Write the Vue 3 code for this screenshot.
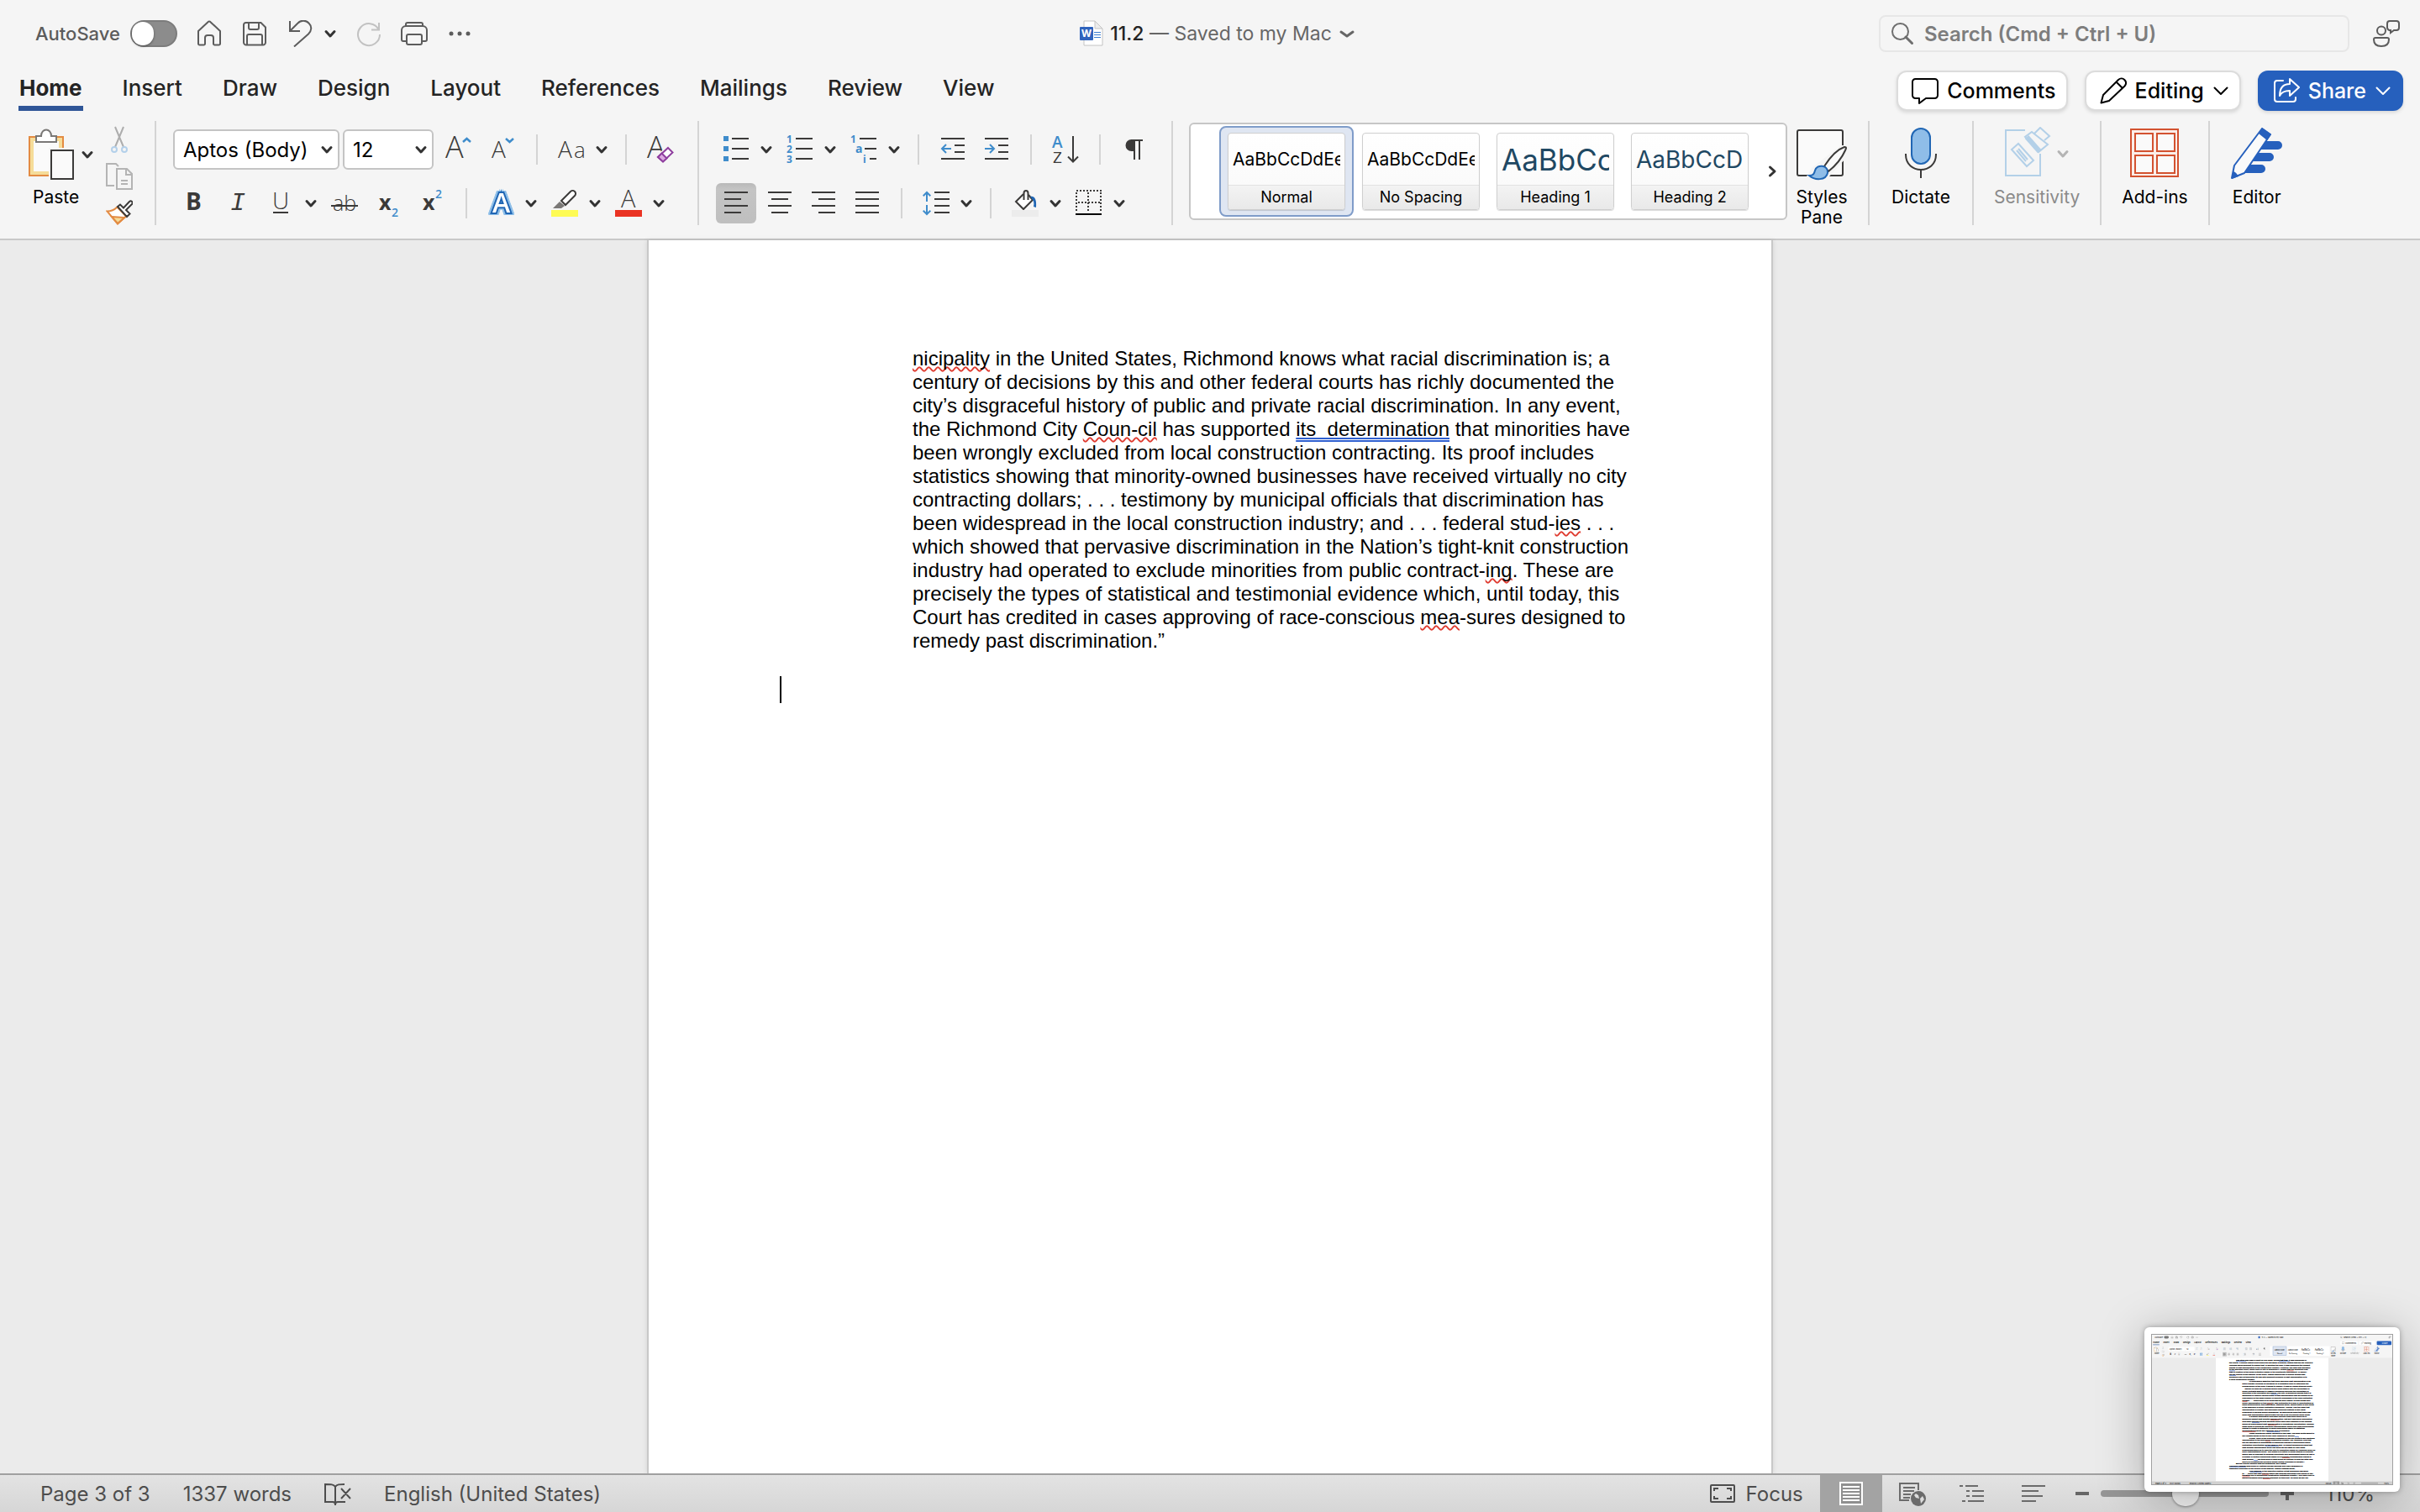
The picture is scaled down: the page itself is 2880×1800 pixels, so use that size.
<script setup>
import { ref } from 'vue'

const tabs = ['Home', 'Insert', 'Draw', 'Design', 'Layout', 'References', 'Mailings', 'Review', 'View']
const activeTab = ref('Home')

const autoSave = ref(false)
const fontName = ref('Aptos (Body)')
const fontSize = ref('12')
const search = ref('')
const zoom = ref(110)

const fontTools = [
  { icon: 'grow', label: 'Increase font size' },
  { icon: 'shrink', label: 'Decrease font size' },
  { sep: true },
  { icon: 'case', label: 'Change case', menu: true },
  { sep: true },
  { icon: 'clear', label: 'Clear formatting' }
]

const textTools = [
  { icon: 'bold', label: 'Bold' },
  { icon: 'italic', label: 'Italic' },
  { icon: 'underline', label: 'Underline', menu: true },
  { icon: 'strike', label: 'Strikethrough' },
  { icon: 'sub', label: 'Subscript' },
  { icon: 'sup', label: 'Superscript' },
  { sep: true },
  { icon: 'effects', label: 'Text effects', menu: true },
  { icon: 'highlight', label: 'Highlight', menu: true },
  { icon: 'fontcolor', label: 'Font color', menu: true }
]

const listTools = [
  { icon: 'bullets', label: 'Bullets', menu: true },
  { icon: 'numbers', label: 'Numbering', menu: true },
  { icon: 'multilevel', label: 'Multilevel list', menu: true },
  { sep: true },
  { icon: 'outdent', label: 'Decrease indent' },
  { icon: 'indent', label: 'Increase indent' },
  { sep: true },
  { icon: 'sort', label: 'Sort' },
  { sep: true },
  { icon: 'pilcrow', label: 'Show marks' }
]

const paragraphTools = [
  { icon: 'left', label: 'Align left', active: true },
  { icon: 'center', label: 'Center' },
  { icon: 'right', label: 'Align right' },
  { icon: 'justify', label: 'Justify' },
  { sep: true },
  { icon: 'spacing', label: 'Line spacing', menu: true },
  { sep: true },
  { icon: 'bucket', label: 'Shading', menu: true },
  { icon: 'borders', label: 'Borders', menu: true }
]

const toolRows = {
  font: [fontTools, textTools],
  paragraph: [listTools, paragraphTools]
}

// letters inside the 32px icons: [text, x, baseline, size, look]
const glyphs = {
  grow: [['A', 0, 26, 36]],
  shrink: [['A', 3, 26, 28]],
  case: [['A', 0, 26, 28], ['a', 19, 26, 26]],
  clear: [['A', 0, 26, 36]],
  bold: [['B', 7, 24, 28, 'strong']],
  italic: [['I', 8, 24, 30, 'slab']],
  underline: [['U', 6, 23, 28]],
  strike: [['ab', 2, 25, 25]],
  sub: [['x', 5, 24, 25, 'strong'], ['2', 20, 32, 14, 'blue']],
  sup: [['x', 5, 24, 25, 'strong'], ['2', 20, 10, 14, 'blue']],
  effects: [['A', 6, 27, 32, 'fx']],
  fontcolor: [['A', 7, 21, 29]],
  numbers: [['1', 0, 8, 12, 'digit'], ['2', 0, 20, 12, 'digit'], ['3', 0, 32, 12, 'digit']],
  multilevel: [['1', 0, 8, 12, 'digit'], ['a', 6, 20, 14, 'digit'], ['i', 15, 32, 12, 'digit']],
  sort: [['A', 0, 14, 19, 'blue'], ['Z', 1, 32, 19, 'mid']]
}

const styleCards = [
  { name: 'Normal', kind: 'body' },
  { name: 'No Spacing', kind: 'body' },
  { name: 'Heading 1', kind: 'h1' },
  { name: 'Heading 2', kind: 'h2' }
]
const activeStyle = ref('Normal')

const bigTools = [
  { icon: 'dictate', label: 'Dictate' },
  { icon: 'sensitivity', label: 'Sensitivity', menu: true, disabled: true },
  { icon: 'addins', label: 'Add-ins' },
  { icon: 'editor', label: 'Editor' }
]

// each line is a list of [text, proofing mark]
const lines = [
  [['nicipality', 'spell'], [' in the United States, Richmond knows what racial discrimination is; a']],
  [['century of decisions by this and other federal courts has richly documented the']],
  [['city’s disgraceful history of public and private racial discrimination. In any event,']],
  [['the Richmond City '], ['Coun-cil', 'spell'], [' has supported '], ['its  determination', 'grammar'], [' that minorities have']],
  [['been wrongly excluded from local construction contracting. Its proof includes']],
  [['statistics showing that minority-owned businesses have received virtually no city']],
  [['contracting dollars; . . . testimony by municipal officials that discrimination has']],
  [['been widespread in the local construction industry; and . . . federal stud-'], ['ies', 'spell'], [' . . .']],
  [['which showed that pervasive discrimination in the Nation’s tight-knit construction']],
  [['industry had operated to exclude minorities from public contract-'], ['ing', 'spell'], ['. These are']],
  [['precisely the types of statistical and testimonial evidence which, until today, this']],
  [['Court has credited in cases approving of race-conscious '], ['mea', 'spell'], ['-sures designed to']],
  [['remedy past discrimination.”']]
]

const views = [
  { icon: 'print-view', label: 'Print layout', active: true },
  { icon: 'web-view', label: 'Web layout' },
  { icon: 'outline-view', label: 'Outline' },
  { icon: 'draft-view', label: 'Draft' }
]

// text of the page shown in the floating preview: [left edge, text]
const previewLines = [
  [1010, 'The city’s plan was in effect for five years. During that time, it was challenged in'],
  [930, 'the courts. A federal district court upheld the set-aside ordinance, stating that the city council’s'],
  [930, '“findings [were] sufficient to ensure that, in adopting the Plan, it was remedying the present'],
  [930, 'effects of past discrimination in the construction industry.” However, the case was appealed'],
  [930, 'to the Supreme Court, which ruled in City of Richmond v. Croson that the Richmond plan'],
  [930, 'was in violation of the equal protection clause of the Fourteenth Amendment. In deliver-'],
  [930, 'ing the opinion of the majority of the Court, Justice Sandra Day O’Connor argued that'],
  [930, 'Richmond had not supported its plan with sufficient evidence of past discrimination in th'],
  [930, 'e city’s construction industry.'],
  [1167, '“A generalized assertion that there has been past discrimination in an'],
  [1085, 'entire industry provides no guidance for a legislative body to determine the'],
  [1085, 'precise scope of the injury it seeks to remedy. It “has no logical stopping point.”'],
  [1115, '“Relief” for such an ill-defined wrong could extend until the percentage of'],
  [1085, 'public contracts awarded to MBEs in Richmond mirrored the percentage of'],
  [1085, 'minorities in the population as a whole. The City of Richmond argues that it is'],
  [1085, 'attempting to remedy various forms of past discrimination that are alleged to be'],
  [1085, 'responsible for the small number of minority businesses in the local contracting'],
  [1085, 'industry. . . . While there is no doubt that the sorry history of both private and'],
  [1085, 'public discrimination in this coun-try has contributed to a lack of opportunities for'],
  [1085, 'black entrepreneurs, this observation, standing alone, cannot justify a rigid quota'],
  [1085, 'in the awarding of public contracts in Richmond, Virginia. Like the claim that'],
  [1085, 'discrimination in primary and secondary schooling justifies a rigid racial'],
  [1085, 'preference in medical school admissions, an amorphous claim that there has'],
  [1085, 'been past discrimination cannot justify the use of an un-yielding racial quota.'],
  [1167, 'It is sheer speculation how many minority firms there would be in'],
  [1085, 'Richmond absent past societal discrimi-nation, just as it was sheer speculation'],
  [1085, 'how many minority medical students would have been admitted to the medical'],
  [1085, 'school at Davis absent past discrimi-nation in educational opportunities. Defining'],
  [1085, 'these sorts of injuries as “identified discrimination” would give local governments'],
  [1085, 'license to create a patchwork of racial preferences based on statistical'],
  [1085, 'generalizations about any particular field of endeavor.'],
  [1167, 'These defects are readily apparent in this case. The 30% quota cannot in'],
  [1085, 'any realistic sense be tied to any injury suffered by anyone. . . .'],
  [1167, 'In sum, none of the evidence presented by the city points to any identified'],
  [1085, 'discrimination in the Rich-mond construction industry. We, therefore, hold that'],
  [1085, 'the city has failed to demonstrate a compelling interest in apportioning public'],
  [1085, 'contracting opportunities on the basis of race. To accept Richmond’s claim that'],
  [1085, 'past societal discrimination alone can serve as the basis for rigid racial'],
  [1085, 'preferences would be to open the door to competing claims for “remedial relief” for'],
  [1085, 'every disadvantaged group. The dream of a Nation of equal citizens in a society'],
  [1085, 'where race is irrelevant to personal opportunity and achievement would be lost in'],
  [1085, 'a mosaic of shifting preferences based on in-herently unmeasurable claims of'],
  [1085, 'past wrongs. . . . We think such a result would be contrary to both the letter and'],
  [1085, 'spirit of a constitutional provision whose central command is equality.”'],
  [1010, 'But the Court’s decision was not unanimous, and Justice'],
  [930, 'Thurgood Marshall was joined by Justices William Brennan and Harry Blackmun in'],
  [930, 'dissenting vigorously to the opinion of the majority. Justice Marshall wrote,'],
  [1167, '“The essence of the majority’s position is that Richmond has failed'],
  [1085, 'to . . . prove that past discrimi-nation has impeded minorities from joining or par-'],
  [1085, 'ticipating fully in Richmond’s construction contracting industry. I find deep irony in'],
  [1085, 'second-guessing Rich-mond’s judgment on this point. As much as any mu']
]

// [x, line number, width, color]
const previewMarks = [
  [1010, 0, 120, 'blue'], [1520, 0, 130, 'blue'], [930, 4, 70, 'blue'], [1615, 4, 80, 'red'],
  [930, 6, 80, 'blue'], [1430, 14, 80, 'blue'], [1085, 17, 60, 'red'], [1380, 18, 60, 'red'],
  [1420, 25, 100, 'red'], [1200, 26, 90, 'blue'], [1390, 27, 100, 'red'], [1085, 30, 160, 'red'],
  [1380, 30, 150, 'blue'], [1710, 32, 50, 'blue'], [1360, 34, 60, 'red'], [1360, 36, 160, 'blue'],
  [1560, 41, 90, 'red'], [1220, 42, 50, 'blue'], [930, 45, 200, 'blue'], [1180, 47, 140, 'blue'],
  [1320, 48, 80, 'red'], [1085, 49, 90, 'red'], [1330, 50, 90, 'red']
]

const previewTabs = [[23, 'Home'], [145, 'Insert'], [267, 'Draw'], [379, 'Design'], [512, 'Layout'], [646, 'References'], [837, 'Mailings'], [988, 'Review'], [1125, 'View']]

// [icon, x, y]
const previewIcons = [
  ['home', 234, 24], ['save', 288, 24], ['undo', 342, 24], ['redo', 422, 24], ['print', 476, 24], ['more', 530, 24],
  ['cut', 126, 150], ['copy', 126, 194], ['painter', 126, 238],
  ['grow', 530, 162], ['shrink', 582, 162], ['case', 664, 162], ['clear', 768, 162],
  ['bold', 215, 226], ['italic', 266, 226], ['underline', 317, 226], ['strike', 394, 226], ['sub', 450, 226], ['sup', 502, 226],
  ['effects', 580, 226], ['highlight', 656, 226], ['fontcolor', 732, 226],
  ['bullets', 857, 162], ['numbers', 933, 162], ['multilevel', 1009, 162], ['outdent', 1116, 162], ['indent', 1168, 162],
  ['sort', 1249, 162], ['pilcrow', 1332, 162],
  ['left', 858, 226], ['center', 910, 226], ['right', 962, 226], ['justify', 1014, 226],
  ['spacing', 1096, 226], ['bucket', 1202, 226], ['borders', 1278, 226]
]
</script>

<template>
  <div class="window">
    <svg class="sprite" aria-hidden="true">
      <symbol id="i-chevron" viewBox="0 0 16 16">
        <path d="M3 5.5l5 5.5 5-5.5" fill="none" stroke="currentColor" stroke-width="3" stroke-linecap="round" stroke-linejoin="round" />
      </symbol>
      <symbol id="i-thin-chevron" viewBox="0 0 20 20">
        <path d="M2.5 6.5L10 14l7.5-7.5" fill="none" stroke="currentColor" stroke-width="2" stroke-linecap="round" stroke-linejoin="round" />
      </symbol>
      <symbol id="i-flat-chevron" viewBox="0 0 20 20">
        <path d="M3 8l7 5 7-5" fill="none" stroke="currentColor" stroke-width="3" stroke-linecap="round" stroke-linejoin="round" />
      </symbol>
      <symbol id="i-home" viewBox="0 0 32 32">
        <path d="M3 13L14.5 2.2a2 2 0 0 1 3 0L29 13v15a1.500 1.500 0 0 1-1.500 1.500h-5A1.500 1.500 0 0 1 21 28v-7a3 3 0 0 0-3-3h-4a3 3 0 0 0-3 3v7a1.500 1.500 0 0 1-1.500 1.500h-5A1.500 1.500 0 0 1 3 28z" fill="none" stroke="currentColor" stroke-width="2" stroke-linejoin="round" />
      </symbol>
      <symbol id="i-save" viewBox="0 0 32 32">
        <g fill="none" stroke="currentColor" stroke-width="2">
          <path d="M5.5 3h18L29 8.500v18a3 3 0 0 1-3 3H6a3 3 0 0 1-3-3v-21a2.500 2.500 0 0 1 2.500-2.500z" />
          <path d="M9 3v6a2 2 0 0 0 2 2h8a2 2 0 0 0 2-2V3M7 29V19a2 2 0 0 1 2-2h14a2 2 0 0 1 2 2v10" />
        </g>
      </symbol>
      <symbol id="i-undo" viewBox="0 0 32 32">
        <path d="M4 1v12h12M4.500 12.500l9-9a8.800 8.800 0 0 1 13 0c4 4 3.500 9-.5 13L9 31.500" fill="none" stroke="currentColor" stroke-width="2" />
      </symbol>
      <symbol id="i-redo" viewBox="0 0 32 32">
        <path d="M28 3v8.500h-9M27.500 11A13 13 0 1 0 29 17" fill="none" stroke="currentColor" stroke-width="2" />
      </symbol>
      <symbol id="i-print" viewBox="0 0 32 32">
        <g fill="none" stroke="currentColor" stroke-width="2">
          <path d="M6 7V5a2 2 0 0 1 2-2h16a2 2 0 0 1 2 2v2" />
          <path d="M7 25H3a2 2 0 0 1-2-2V12a5 5 0 0 1 5-5h20a5 5 0 0 1 5 5v11a2 2 0 0 1-2 2h-4" />
          <rect x="7" y="17" width="18" height="12" rx="2" />
        </g>
      </symbol>
      <symbol id="i-more" viewBox="0 0 32 32">
        <g fill="currentColor"><circle cx="6" cy="16" r="2.500" /><circle cx="16" cy="16" r="2.500" /><circle cx="26" cy="16" r="2.500" /></g>
      </symbol>
      <symbol id="i-word" viewBox="0 0 28 32">
        <path d="M5 1h13l9 9v20H5z" fill="#fff" stroke="#c4c4c4" />
        <path d="M18 1v9h9z" fill="#ececec" stroke="#c4c4c4" />
        <path d="M17 14.500h8M17 17.500h8M17 20.500h8" stroke="#3a7bd0" stroke-width="1" />
        <rect x="0" y="8" width="16" height="16" rx="1" fill="#2f63bd" />
      </symbol>
      <symbol id="i-search" viewBox="0 0 28 28">
        <g fill="none" stroke="currentColor" stroke-width="2"><circle cx="11.500" cy="11.500" r="9.500" /><path d="M18 18l7.500 7.500" stroke-width="3" stroke-linecap="round" /></g>
      </symbol>
      <symbol id="i-person" viewBox="0 0 32 32">
        <g fill="none" stroke="currentColor" stroke-width="2">
          <circle cx="10" cy="12.500" r="5" />
          <path d="M3 21h14a2 2 0 0 1 2 2c0 5-3 8-9 8s-9-3-9-8a2 2 0 0 1 2-2z" />
          <path d="M20 1h8a3 3 0 0 1 3 3v5a3 3 0 0 1-3 3h-3l-4 3v-3a3.500 3.500 0 0 1-4-3V4a3 3 0 0 1 3-3z" />
        </g>
      </symbol>
      <symbol id="i-comment" viewBox="0 0 32 32">
        <path d="M4.500 2h23A3.500 3.500 0 0 1 31 5.500v16a3.500 3.500 0 0 1-3.500 3.500H17l-8 6v-6H4.500A3.500 3.500 0 0 1 1 21.500v-16A3.500 3.500 0 0 1 4.500 2z" fill="none" stroke="currentColor" stroke-width="2" stroke-linejoin="round" />
      </symbol>
      <symbol id="i-pencil" viewBox="0 0 32 32">
        <path d="M1.500 30.500L4 21 22 3c5-4.500 12 2 7.500 7.500L11 28zM19.500 5.500l7.500 7.500" fill="none" stroke="currentColor" stroke-width="2" stroke-linejoin="round" />
      </symbol>
      <symbol id="i-share" viewBox="0 0 32 32">
        <g fill="none" stroke="currentColor" stroke-width="2" stroke-linejoin="round" stroke-linecap="round">
          <path d="M12 4H5a3 3 0 0 0-3 3v19a3 3 0 0 0 3 3h19a3 3 0 0 0 3-3v-2" />
          <path d="M20 2l11 10-11 10v-6c-6 0-10 2-12 6 0-9 4-14 12-14z" />
        </g>
      </symbol>

      <symbol id="i-paste" viewBox="0 0 56 62">
        <rect x="2" y="10" width="40" height="46" fill="#fafafa" stroke="#e38b42" stroke-width="2" />
        <rect x="5" y="13" width="34" height="40" fill="none" stroke="#f5dc99" stroke-width="4" />
        <path d="M10 16V9h6c0-10 12-10 12 0h6v7z" fill="#fff" stroke="#7a7876" stroke-width="2" />
        <path d="M25 23h31v39H25z" fill="#f5f5f5" />
        <rect x="28" y="26" width="26" height="34" fill="#fafafa" stroke="#3b3a39" stroke-width="2" />
      </symbol>
      <symbol id="i-cut" viewBox="0 0 32 32">
        <path d="M11 1l10 24M21 1L11 25" stroke="#adadad" stroke-width="2" />
        <g fill="none" stroke="#b3d0ea" stroke-width="2"><circle cx="10" cy="28" r="3" /><circle cx="22" cy="28" r="3" /></g>
      </symbol>
      <symbol id="i-copy" viewBox="0 0 32 32">
        <g fill="none" stroke="#b4b4b4" stroke-width="2">
          <path d="M10 27H1V1h11l3 3" /><path d="M13 7h12l6 6v18H13zM24 7v7h7M18 21h8M18 25h8" />
        </g>
      </symbol>
      <symbol id="i-painter" viewBox="0 0 32 32">
        <path d="M1.500 13.500c5 0 9-2 12-5L24 19.500 14 28.500z" fill="#fff" stroke="#e38b42" stroke-width="2" />
        <path d="M7 20l15 1-8 7z" fill="#f5dc99" stroke="#e38b42" stroke-width="2" />
        <path d="M14 8l3-2.500 4 4L28 2a2 2 0 0 1 3 3l-7 7 4.500 4.500L25 20z" fill="#fff" stroke="#3b3a39" stroke-width="2" />
      </symbol>

      <symbol id="i-grow" viewBox="0 0 32 32"><path d="M21 7l4.500-4 4.500 4" fill="none" stroke="#3f8ccb" stroke-width="2.500" /></symbol>
      <symbol id="i-shrink" viewBox="0 0 32 32"><path d="M20 3l4.500 4L29 3" fill="none" stroke="#3f8ccb" stroke-width="2.500" /></symbol>
      <symbol id="i-clear" viewBox="0 0 32 32">
        <path d="M10 25L25 10l7 9-13 13z" fill="#f5f5f5" />
        <path d="M25 14l5.500 5.500L19 30.500 13 25z" fill="#fff" stroke="#8f3f9f" stroke-width="2" />
        <path d="M17.500 20.500l6 6-4.500 4L13 25z" fill="#dba9e0" stroke="#8f3f9f" stroke-width="2" />
      </symbol>
      <symbol id="i-underline" viewBox="0 0 32 32"><path d="M7 27h18" stroke="#3b3a39" stroke-width="2" /></symbol>
      <symbol id="i-strike" viewBox="0 0 32 32"><path d="M0 19h32" stroke="#3b3a39" stroke-width="2" /></symbol>
      <symbol id="i-highlight" viewBox="0 0 32 32">
        <path d="M2 22l8-8 6 5-4 3z" fill="#7a7876" />
        <path d="M12 13L23 2a3.500 3.500 0 0 1 5 5L17 18z" fill="#fff" stroke="#3b3a39" stroke-width="2" />
        <rect y="24" width="32" height="8" fill="#fefb54" />
      </symbol>
      <symbol id="i-fontcolor" viewBox="0 0 32 32"><rect y="24" width="32" height="8" fill="#ea3323" /></symbol>
      <symbol id="i-bullets" viewBox="0 0 32 32">
        <path d="M1 0h6v6H1zM1 12h6v6H1zM1 24h6v6H1z" fill="#3f8ccb" />
        <path d="M11 3h20M11 15h20M11 27h20" stroke="#3b3a39" stroke-width="2" />
      </symbol>
      <symbol id="i-numbers" viewBox="0 0 32 32"><path d="M11 3h20M11 15h20M11 27h20" stroke="#3b3a39" stroke-width="2" /></symbol>
      <symbol id="i-multilevel" viewBox="0 0 32 32"><path d="M11 3h20M17 15h14M23 27h8" stroke="#3b3a39" stroke-width="2" /></symbol>
      <symbol id="i-outdent" viewBox="0 0 32 32">
        <path d="M2 3h28M18 11h12M18 19h12M2 27h28" stroke="#3b3a39" stroke-width="2" />
        <path d="M14 15H3M8 10l-5 5 5 5" fill="none" stroke="#3f8ccb" stroke-width="2" />
      </symbol>
      <symbol id="i-indent" viewBox="0 0 32 32">
        <path d="M2 3h28M18 11h12M18 19h12M2 27h28" stroke="#3b3a39" stroke-width="2" />
        <path d="M2 15h11M8 10l5 5-5 5" fill="none" stroke="#3f8ccb" stroke-width="2" />
      </symbol>
      <symbol id="i-sort" viewBox="0 0 32 32">
        <path d="M25 0v30M19 24.500l6 6 6-6" fill="none" stroke="#3b3a39" stroke-width="2" />
      </symbol>
      <symbol id="i-pilcrow" viewBox="0 0 32 32">
        <path d="M16 4h-3.500a7 7 0 0 0 0 14H15V5h11" fill="#3b3a39" />
        <path d="M12 5h14M16 5v23M22 5v23" stroke="#3b3a39" stroke-width="2" />
      </symbol>
      <symbol id="i-left" viewBox="0 0 32 32"><path d="M2 3h28M2 11h20M2 19h28M2 27h20" stroke="#3b3a39" stroke-width="2" /></symbol>
      <symbol id="i-center" viewBox="0 0 32 32"><path d="M2 3h28M6 11h20M2 19h28M6 27h20" stroke="#3b3a39" stroke-width="2" /></symbol>
      <symbol id="i-right" viewBox="0 0 32 32"><path d="M2 3h28M10 11h20M2 19h28M10 27h20" stroke="#3b3a39" stroke-width="2" /></symbol>
      <symbol id="i-justify" viewBox="0 0 32 32"><path d="M2 3h28M2 11h28M2 19h28M2 27h28" stroke="#3b3a39" stroke-width="2" /></symbol>
      <symbol id="i-spacing" viewBox="0 0 32 32">
        <path d="M14 3h18M14 11h18M14 19h18M14 27h18" stroke="#3b3a39" stroke-width="2" />
        <path d="M5 14V3M.7 7.300L5 3l4.300 4.300M5 18v11M.7 24.700L5 29l4.300-4.300" fill="none" stroke="#3f8ccb" stroke-width="2" />
      </symbol>
      <symbol id="i-bucket" viewBox="0 0 32 32">
        <path d="M14 5l-9 9 9 9L25 12l-5-6" fill="#fff" stroke="#3b3a39" stroke-width="2" />
        <path d="M14.500 12V4c0-4 5-4 5 0v8" fill="none" stroke="#3b3a39" stroke-width="2" />
        <path d="M22 8c5-1 8 3 7 13l-3-1c1-4 0-7-1-8z" fill="#2066b4" />
        <rect y="24" width="32" height="8" fill="#ececec" />
      </symbol>
      <symbol id="i-borders" viewBox="0 0 32 32">
        <path d="M1 1h30M1 3v23M30 3v23M15 3v23M3 15h26" fill="none" stroke="#3b3a39" stroke-width="2" stroke-dasharray="2 2" />
        <path d="M0 29h31" stroke="#000" stroke-width="2" />
      </symbol>

      <symbol id="i-stylespane" viewBox="0 0 64 64">
        <rect x="3" y="4" width="54" height="54" rx="2" fill="#fafafa" stroke="#3b3a39" stroke-width="2" />
        <path d="M55 22h6v15l-20 22H14l6-10z" fill="#f5f5f5" />
        <path d="M35 47C44 33 53 26 59 24c3 0 2 2 1 4-4 9-10 17-20 25z" fill="#fafafa" stroke="#3b3a39" stroke-width="2" />
        <path d="M17 58c5 0 6-2 7-6 2-8 16-7 15 3-2 9-15 9-22 3z" fill="#8fbde8" stroke="#2066b4" stroke-width="2" />
      </symbol>
      <symbol id="i-dictate" viewBox="0 0 64 64">
        <rect x="21" y="2" width="22" height="42" rx="11" fill="#8fbde8" stroke="#2066b4" stroke-width="2" />
        <path d="M14 32v1c0 24 36 24 36 0v-1M32 51v10" fill="none" stroke="#3b3a39" stroke-width="2" />
      </symbol>
      <symbol id="i-sensitivity" viewBox="0 0 56 64">
        <g fill="none" stroke="#b3d0e8" stroke-width="2">
          <path d="M25 4H2v54h41V32" />
          <path d="M17 20l18 20-8 7L9 27zM17 26l11 13" /><path d="M15 28l11 13" />
          <path d="M33 6l19 15-11 9L25 12zM36 8l7-7 11 10-6 5" />
          <path d="M27 12l15 17" stroke-width="6" />
        </g>
      </symbol>
      <symbol id="i-addins" viewBox="0 0 64 64">
        <rect x="4" y="3" width="56" height="56" fill="#fbeee9" stroke="#d35230" stroke-width="2" />
        <g fill="#fafafa" stroke="#d35230" stroke-width="2">
          <rect x="9" y="8" width="21" height="21" /><rect x="35" y="8" width="21" height="21" />
          <rect x="9" y="34" width="21" height="21" /><rect x="35" y="34" width="21" height="21" />
        </g>
      </symbol>
      <symbol id="i-editor" viewBox="0 0 64 64">
        <path d="M30 17h27a5 5 0 0 1 0 10H24zM24 31h23a5 5 0 0 1 0 10H18zM16 45h21a5 5 0 0 1 0 10H10z" fill="#2660bd" />
        <path d="M38 2l10 7-31 46L2 61l3-15z" fill="#fafafa" stroke="#2660bd" stroke-width="2" stroke-linejoin="round" />
        <path d="M38 1l11 8-5 7-10-8zM2 62l2-9c3 1 4 3 6 6z" fill="#2660bd" />
      </symbol>

      <symbol id="i-proof" viewBox="0 0 32 32">
        <path d="M13 8c-2-3-5-3-12-3v21h9c2 0 3 1 3 3M13 8v22M13 8c2-3 5-3 11-3M13 29c0-2 1-3 3-3h9M20 10l11 12M31 10L20 22" fill="none" stroke="currentColor" stroke-width="2" />
      </symbol>
      <symbol id="i-focus" viewBox="0 0 32 32">
        <g fill="none" stroke="currentColor" stroke-width="2"><rect x="2" y="6" width="28" height="20" rx="1" /><path d="M6 13v-3h5M21 10h5v3M6 19v3h5M26 19v3h-5" /></g>
      </symbol>
      <symbol id="i-print-view" viewBox="0 0 32 32">
        <path d="M3 3h26v26H3z" fill="#8f8f8f" stroke="#fff" stroke-width="2" />
        <path d="M6 8h20M6 12h20M6 16h20M6 20h20M6 24h20" stroke="#fff" stroke-width="2" />
      </symbol>
      <symbol id="i-web-view" viewBox="0 0 32 32">
        <path d="M12 24H1V4h22v8M5 9h14M5 13h13M5 17h9M5 21h8" fill="none" stroke="#6b6b6b" stroke-width="2" />
        <circle cx="23" cy="22" r="9" fill="#6b6b6b" />
        <path d="M20 16l3 2 1 4-4-1-2-3zM25 22l3-3 2 4-4 5z" fill="#dcdcdc" />
      </symbol>
      <symbol id="i-outline-view" viewBox="0 0 32 32">
        <path d="M0 7h4M7 7h15M8 13h4M15 13h14M8 19h4M15 19h14M3 25h4M10 25h19" stroke="#6b6b6b" stroke-width="2" />
      </symbol>
      <symbol id="i-draft-view" viewBox="0 0 32 32">
        <path d="M2 7h28M2 13h20M2 19h25M2 25h17" stroke="#6b6b6b" stroke-width="2" />
      </symbol>
    </svg>

    <header class="titlebar">
      <div class="quick">
        <label class="autosave">
          <span>AutoSave</span>
          <input v-model="autoSave" type="checkbox" class="switch" />
        </label>
        <button type="button" aria-label="Home"><svg class="icon"><use href="#i-home" /></svg></button>
        <button type="button" aria-label="Save"><svg class="icon"><use href="#i-save" /></svg></button>
        <button type="button" class="undo" aria-label="Undo">
          <svg class="icon"><use href="#i-undo" /></svg>
          <svg class="chevron"><use href="#i-chevron" /></svg>
        </button>
        <button type="button" class="faded" aria-label="Redo"><svg class="icon"><use href="#i-redo" /></svg></button>
        <button type="button" aria-label="Print"><svg class="icon"><use href="#i-print" /></svg></button>
        <button type="button" aria-label="More"><svg class="icon"><use href="#i-more" /></svg></button>
      </div>
      <button type="button" class="doc-title">
        <svg class="word" viewBox="0 0 28 32">
          <use href="#i-word" />
          <text x="8" y="20" font-size="12" font-weight="700" text-anchor="middle" fill="#fff">W</text>
        </svg>
        <span><b>11.2</b> — Saved to my Mac</span>
        <svg class="thin-chevron"><use href="#i-flat-chevron" /></svg>
      </button>
      <div class="title-right">
        <label class="search">
          <svg><use href="#i-search" /></svg>
          <input v-model="search" type="text" aria-label="Search" placeholder="Search (Cmd + Ctrl + U)" />
        </label>
        <button type="button" aria-label="Presence"><svg class="icon"><use href="#i-person" /></svg></button>
      </div>
    </header>

    <nav class="tabbar">
      <div class="tabs">
        <button
          v-for="tab in tabs"
          :key="tab"
          type="button"
          class="tab"
          :class="{ active: tab === activeTab }"
          @click="activeTab = tab"
        >{{ tab }}</button>
      </div>
      <div class="actions">
        <button type="button" class="action"><svg class="icon"><use href="#i-comment" /></svg>Comments</button>
        <button type="button" class="action">
          <svg class="icon"><use href="#i-pencil" /></svg>Editing
          <svg class="thin-chevron"><use href="#i-thin-chevron" /></svg>
        </button>
        <button type="button" class="action share">
          <svg class="icon"><use href="#i-share" /></svg>Share
          <svg class="thin-chevron"><use href="#i-thin-chevron" /></svg>
        </button>
      </div>
    </nav>

    <section class="ribbon">
      <div class="clipboard">
        <div class="paste">
          <div class="paste-top">
            <button type="button" aria-label="Paste from clipboard"><svg class="paste-icon"><use href="#i-paste" /></svg></button>
            <button type="button" aria-label="Paste options"><svg class="chevron"><use href="#i-chevron" /></svg></button>
          </div>
          <button type="button" class="paste-label">Paste</button>
        </div>
        <div class="clip-tools">
          <button type="button" aria-label="Cut" disabled><svg class="icon"><use href="#i-cut" /></svg></button>
          <button type="button" aria-label="Copy" disabled><svg class="icon"><use href="#i-copy" /></svg></button>
          <button type="button" aria-label="Format painter"><svg class="icon"><use href="#i-painter" /></svg></button>
        </div>
      </div>

      <div v-for="(rows, group) in toolRows" :key="group" class="group" :class="group">
        <div v-for="(row, r) in rows" :key="r" class="tool-row">
          <template v-if="group === 'font' && r === 0">
            <div class="combo font-combo">
              <select v-model="fontName" aria-label="Font"><option>Aptos (Body)</option></select>
              <svg class="chevron"><use href="#i-chevron" /></svg>
            </div>
            <div class="combo size-combo">
              <select v-model="fontSize" aria-label="Font size"><option>12</option></select>
              <svg class="chevron"><use href="#i-chevron" /></svg>
            </div>
          </template>
          <template v-for="(tool, i) in row" :key="i">
            <span v-if="tool.sep" class="tool-sep"></span>
            <button
              v-else
              type="button"
              class="tool"
              :class="{ menu: tool.menu, active: tool.active }"
              :aria-label="tool.label"
            >
              <svg class="icon" viewBox="0 0 32 32">
                <text
                  v-for="(g, n) in glyphs[tool.icon]"
                  :key="n"
                  class="glyph"
                  :class="g[4]"
                  :x="g[1]"
                  :y="g[2]"
                  :font-size="g[3]"
                >{{ g[0] }}</text>
                <use :href="`#i-${tool.icon}`" />
              </svg>
              <svg v-if="tool.menu" class="chevron"><use href="#i-chevron" /></svg>
            </button>
          </template>
        </div>
      </div>

      <div class="styles-group">
        <div class="gallery">
          <button
            v-for="card in styleCards"
            :key="card.name"
            type="button"
            class="style-card"
            :class="{ active: card.name === activeStyle }"
            @click="activeStyle = card.name"
          >
            <span class="card-inner">
              <span class="sample" :class="card.kind">AaBbCcDdEe</span>
              <span class="card-name">{{ card.name }}</span>
            </span>
          </button>
          <button type="button" class="gallery-next" aria-label="More styles"><svg class="chevron"><use href="#i-chevron" /></svg></button>
        </div>
        <button type="button" class="big styles-pane">
          <svg class="big-icon"><use href="#i-stylespane" /></svg>
          <span>Styles<br />Pane</span>
        </button>
      </div>

      <div v-for="tool in bigTools" :key="tool.icon" class="big-group">
        <button type="button" class="big" :class="tool.icon" :disabled="tool.disabled">
          <span class="big-top">
            <svg class="big-icon"><use :href="`#i-${tool.icon}`" /></svg>
            <svg v-if="tool.menu" class="chevron"><use href="#i-chevron" /></svg>
          </span>
          <span>{{ tool.label }}</span>
        </button>
      </div>
    </section>

    <main class="desk">
      <article class="page">
        <blockquote class="quote">
          <p v-for="(line, i) in lines" :key="i"><span v-for="(part, j) in line" :key="j" :class="part[1]">{{ part[0] }}</span></p>
        </blockquote>
        <div class="caret"></div>
      </article>
    </main>

    <footer class="statusbar">
      <div class="status-left">
        <button type="button">Page 3 of 3</button>
        <button type="button">1337 words</button>
        <button type="button" aria-label="Proofing"><svg class="icon"><use href="#i-proof" /></svg></button>
        <button type="button">English (United States)</button>
      </div>
      <div class="status-right">
        <button type="button" class="focus"><svg class="icon"><use href="#i-focus" /></svg>Focus</button>
        <button
          v-for="view in views"
          :key="view.icon"
          type="button"
          class="view"
          :class="{ active: view.active }"
          :aria-label="view.label"
        ><svg class="icon"><use :href="`#i-${view.icon}`" /></svg></button>
        <button type="button" class="step" aria-label="Zoom out"></button>
        <input v-model="zoom" type="range" min="10" max="206" class="zoom" aria-label="Zoom" />
        <button type="button" class="step plus" aria-label="Zoom in"></button>
        <button type="button" class="zoom-value">{{ zoom }}%</button>
      </div>
    </footer>

    <aside class="preview" aria-hidden="true">
      <svg class="preview-shot" viewBox="0 0 2880 1800">
        <rect width="2880" height="1800" fill="#ebebeb" />
        <rect width="2880" height="285" fill="#f5f5f5" />
        <rect x="770" y="285" width="1340" height="1470" fill="#fff" />
        <rect y="1755" width="2880" height="45" fill="#d0d0d0" />
        <g class="mini-ui">
          <text x="42" y="49" font-size="22">AutoSave</text>
          <rect x="154" y="26" width="56" height="28" rx="14" fill="#777" />
          <rect x="1276" y="28" width="20" height="24" fill="#2f63bd" />
          <text x="1314" y="49" font-size="23">11.2 — Saved to my Mac</text>
          <text x="2290" y="49" font-size="24">Search (Cmd + Ctrl + U)</text>
          <use href="#i-search" x="2250" y="26" width="28" height="28" />
          <use href="#i-person" x="2824" y="24" width="32" height="32" />
          <text v-for="t in previewTabs" :key="t[0]" :x="t[0]" y="114" font-size="26" font-weight="600">{{ t[1] }}</text>
          <rect x="22" y="126" width="76" height="6" fill="#2b579a" />
          <rect x="2252" y="84" width="206" height="48" rx="10" fill="#fff" />
          <rect x="2478" y="84" width="188" height="48" rx="10" fill="#fff" />
          <rect x="2686" y="84" width="174" height="48" rx="10" fill="#2660bd" />
          <use href="#i-comment" x="2270" y="92" width="32" height="32" />
          <use href="#i-pencil" x="2496" y="92" width="32" height="32" />
          <text x="2313" y="117" font-size="25">Comments</text>
          <text x="2538" y="117" font-size="25">Editing</text>
          <text x="2746" y="117" font-size="25" class="inverse">Share</text>
          <rect x="206" y="154" width="198" height="48" fill="#fff" />
          <rect x="408" y="154" width="108" height="48" fill="#fff" />
          <text x="218" y="187" font-size="24">Aptos (Body)</text>
          <text x="420" y="187" font-size="24">12</text>
          <rect x="850" y="218" width="48" height="48" fill="#c2c2c2" />
          <svg v-for="p in previewIcons" :key="p[0]" :x="p[1]" :y="p[2]" width="32" height="32" viewBox="0 0 32 32">
            <text
              v-for="(g, n) in glyphs[p[0]]"
              :key="n"
              class="glyph"
              :class="g[4]"
              :x="g[1]"
              :y="g[2]"
              :font-size="g[3]"
            >{{ g[0] }}</text>
            <use :href="`#i-${p[0]}`" />
          </svg>
          <use href="#i-paste" x="33" y="153" width="56" height="62" />
          <text x="40" y="243" font-size="21">Paste</text>
          <rect x="1414" y="146" width="711" height="114" fill="#fff" />
          <rect x="1450" y="150" width="160" height="106" fill="#dfe6f2" stroke="#7f9cc9" stroke-width="4" />
          <g v-for="(card, i) in styleCards" :key="card.name">
            <text :x="1467 + i * 160" y="198" :font-size="i > 1 ? 28 : 21">{{ i > 1 ? 'AaBbCc' : 'AaBbCcDdE' }}</text>
            <text :x="1530 + i * 160" y="240" font-size="18" text-anchor="middle">{{ card.name }}</text>
          </g>
          <use href="#i-stylespane" x="2136" y="151" width="64" height="64" />
          <use href="#i-dictate" x="2252" y="151" width="64" height="64" />
          <use href="#i-sensitivity" x="2388" y="151" width="56" height="64" />
          <use href="#i-addins" x="2532" y="151" width="64" height="64" />
          <use href="#i-editor" x="2655" y="151" width="64" height="64" />
          <g font-size="21" text-anchor="middle">
            <text x="2167" y="241">Styles</text><text x="2167" y="267">Pane</text><text x="2285" y="243">Dictate</text>
            <text x="2423" y="243" opacity="0.5">Sensitivity</text><text x="2565" y="243">Add-ins</text><text x="2686" y="243">Editor</text>
          </g>
          <g font-size="24">
            <text x="49" y="1786">Page 2 of 3</text><text x="219" y="1786">1337 words</text>
            <text x="457" y="1786">English (United States)</text><text x="2078" y="1786">Focus</text><text x="2772" y="1786">110%</text>
          </g>
          <rect x="2166" y="1756" width="74" height="44" fill="#999" />
          <use v-for="(view, i) in views" :key="view.icon" :href="`#i-${view.icon}`" :x="2187 + i * 72" y="1762" width="32" height="32" />
          <rect x="2500" y="1774" width="200" height="8" fill="#8c8c8c" />
        </g>
        <g class="mini-doc">
          <text v-for="(line, i) in previewLines" :key="i" :x="line[0]" :y="322 + i * 28">{{ line[1] }}</text>
        </g>
        <rect
          v-for="(mark, i) in previewMarks"
          :key="i"
          :x="mark[0]"
          :y="324 + mark[1] * 28"
          :width="mark[2]"
          height="6"
          :fill="mark[3] === 'red' ? '#e0453c' : '#3a66d0'"
        />
      </svg>
    </aside>
  </div>
</template>

<style>
body {
  margin: 0;
}
</style>

<style scoped>
.window {
  position: relative;
  display: flex;
  flex-direction: column;
  min-height: 100vh;
  overflow: hidden;
  background: #f5f5f5;
  color: #242424;
  font-family: Inter, "Liberation Sans", sans-serif;
}

.sprite {
  position: absolute;
  width: 0;
  height: 0;
}

button {
  display: flex;
  align-items: center;
  padding: 0;
  border: none;
  background: none;
  color: inherit;
  font: inherit;
  white-space: nowrap;
}

svg {
  display: block;
  flex: none;
}

.icon {
  width: 32px;
  height: 32px;
  overflow: visible;
}

.chevron {
  width: 16px;
  height: 16px;
  color: #333;
}

.thin-chevron {
  width: 20px;
  height: 20px;
}

/* letters drawn in tool icons */

.glyph {
  fill: #3b3a39;
  font-family: "Open Sans", "Noto Sans", sans-serif;
  font-weight: 300;
}

.glyph.mid {
  font-weight: 400;
}

.glyph.strong {
  font-weight: 700;
}

.glyph.slab {
  font-family: "Liberation Mono", monospace;
  font-style: italic;
}

.glyph.blue {
  fill: #3f8ccb;
  font-weight: 600;
}

.glyph.digit {
  fill: #3f8ccb;
  font-weight: 700;
}

.glyph.fx {
  fill: #fff;
  stroke: #2066b4;
  stroke-width: 4px;
  paint-order: stroke;
  font-weight: 600;
  filter: drop-shadow(2px 0 0 #8fbfe8) drop-shadow(-2px 0 0 #8fbfe8) drop-shadow(0 -1px 0 #8fbfe8) drop-shadow(0 1px 0 #8fbfe8);
}

/* title bar */

.titlebar {
  display: grid;
  grid-template-columns: 1fr auto 1fr;
  align-items: center;
  height: 80px;
  padding: 0 24px 0 42px;
}

.quick {
  display: flex;
  align-items: center;
  gap: 22px;
  color: #5c5c5c;
}

.autosave {
  display: flex;
  align-items: center;
  gap: 12px;
  font-size: 22px;
  font-weight: 500;
}

.switch {
  display: flex;
  appearance: none;
  box-sizing: border-box;
  width: 56px;
  height: 32px;
  margin: 0;
  border: 2px solid #7c7c7c;
  border-radius: 16px;
  background: #8c8c8c;
}

.switch::before {
  content: "";
  width: 26px;
  height: 28px;
  border-radius: 14px;
  background: #fff;
  box-shadow: 0 1px 3px rgba(0, 0, 0, 0.4);
}

.undo {
  gap: 12px;
}

.faded {
  color: #c2c2c2;
}

.doc-title {
  gap: 8px;
  color: #666;
  font-size: 23px;
}

.doc-title b {
  color: #242424;
  font-weight: 500;
}

.word {
  width: 28px;
  height: 32px;
}

.title-right {
  display: flex;
  justify-content: flex-end;
  align-items: center;
  gap: 28px;
  color: #5c5c5c;
}

.search {
  display: flex;
  align-items: center;
  gap: 12px;
  box-sizing: border-box;
  width: 560px;
  height: 44px;
  padding: 0 12px;
  border: 2px solid #e7e7e7;
  border-radius: 8px;
  color: #6e6e6e;
}

.search svg {
  width: 28px;
  height: 28px;
}

.search input {
  flex: 1;
  min-width: 0;
  padding: 0;
  border: none;
  outline: none;
  background: none;
  color: #333;
  font: inherit;
  font-size: 24px;
  font-weight: 600;
}

.search input::placeholder {
  color: #7d7d7d;
}

/* tabs */

.tabbar {
  display: flex;
  justify-content: space-between;
  align-items: flex-start;
  height: 60px;
  padding: 4px 20px 0 22px;
}

.tabs {
  display: flex;
  gap: 46px;
}

.tab {
  padding: 4px 1px 5px;
  border-bottom: 6px solid transparent;
  font-size: 26px;
  font-weight: 500;
  line-height: 33px;
}

.tab.active {
  border-image: linear-gradient(#2f5597, #2f5597) 1;
  font-weight: 700;
}

.actions {
  display: flex;
  gap: 20px;
}

.action {
  gap: 10px;
  box-sizing: border-box;
  height: 48px;
  padding: 0 12px 0 16px;
  border: 2px solid #dcdcdc;
  border-radius: 12px;
  background: #fff;
  box-shadow: 0 2px 4px rgba(0, 0, 0, 0.12);
  color: #000;
  font-size: 25px;
  font-weight: 500;
}

.action.share {
  border-color: #2660bd;
  background: #2660bd;
  color: #fff;
}

/* ribbon */

.ribbon {
  display: flex;
  box-sizing: border-box;
  height: 142px;
  padding-bottom: 16px;
  border-bottom: 2px solid #c8c8c8;
}

.clipboard,
.group,
.styles-group,
.big-group {
  box-sizing: border-box;
  border-right: 2px solid #d4d4d4;
}

.big-group:last-child {
  border-right: none;
}

.clipboard {
  display: flex;
  justify-content: space-between;
  width: 186px;
  padding: 0 26px 0 33px;
}

.paste {
  display: flex;
  flex-direction: column;
  align-items: flex-start;
  gap: 8px;
  padding-top: 9px;
}

.paste-top {
  display: flex;
  align-items: center;
  gap: 7px;
}

.paste-icon {
  width: 56px;
  height: 62px;
}

.paste-label {
  padding-left: 6px;
  color: #000;
  font-size: 21px;
  line-height: 24px;
}

.clip-tools {
  display: flex;
  flex-direction: column;
  gap: 12px;
  padding-top: 6px;
}

.group {
  display: flex;
  flex-direction: column;
  gap: 16px;
  min-width: 564px;
  padding: 10px 18px 0;
}

.group.font {
  min-width: 644px;
}

.tool-row {
  display: flex;
  align-items: center;
  height: 48px;
}

.combo {
  display: flex;
  align-items: center;
  box-sizing: border-box;
  height: 48px;
  margin-right: 4px;
  padding-right: 5px;
  border: 2px solid #c4c4c4;
  border-radius: 6px;
  background: #fff;
}

.font-combo {
  width: 198px;
  margin-left: 2px;
}

.size-combo {
  width: 108px;
}

.combo select {
  flex: 1;
  min-width: 0;
  padding: 0 0 0 10px;
  border: none;
  appearance: none;
  background: none;
  color: #000;
  font: inherit;
  font-size: 24px;
}

.tool {
  box-sizing: border-box;
  width: 48px;
  height: 48px;
  margin: 0 2px;
  padding: 0 8px;
  border-radius: 6px;
}

.tool.menu {
  gap: 12px;
  width: 72px;
}

.tool.active {
  background: linear-gradient(#b9b9b9, #c4c4c4 15%, #bfbfbf);
}

.tool-sep {
  width: 2px;
  height: 36px;
  margin: 0 14px;
  background: #d4d4d4;
}

.styles-group {
  display: flex;
  align-items: flex-start;
  padding: 0 14px 0 19px;
}

.gallery {
  display: flex;
  align-items: center;
  box-sizing: border-box;
  height: 116px;
  margin-top: 2px;
  padding-left: 34px;
  border: 2px solid #c6c6c6;
  border-radius: 6px;
  background: #fff;
}

.style-card {
  box-sizing: border-box;
  width: 160px;
  height: 108px;
  padding: 6px 8px;
  border: 2px solid transparent;
  border-radius: 8px;
}

.style-card.active {
  border-color: #7f9cc9;
  background: #dfe6f2;
}

.card-inner {
  display: flex;
  flex-direction: column;
  box-sizing: border-box;
  width: 140px;
  height: 92px;
  border: 1px solid #cfcfcf;
  border-radius: 4px;
  background: linear-gradient(#fff, #f8f8f8);
  box-shadow: 0 1px 1px rgba(0, 0, 0, 0.15);
  overflow: hidden;
}

.sample {
  display: flex;
  align-items: center;
  flex: 1;
  margin: 0 5px;
  overflow: hidden;
  color: #000;
  font-size: 21px;
}

.sample.h1 {
  color: #1f4863;
  font-size: 35px;
}

.sample.h2 {
  color: #1f4863;
  font-size: 28px;
}

.card-name {
  border-top: 1px solid #e2e2e2;
  background: linear-gradient(#f3f3f3, #e9e9e9);
  color: #000;
  font-size: 18px;
  line-height: 28px;
  text-align: center;
}

.gallery-next {
  padding: 0 8px 0 10px;
}

.gallery-next .chevron {
  transform: rotate(-90deg);
}

.big {
  flex-direction: column;
  gap: 8px;
  width: 100%;
  padding-top: 7px;
  color: #000;
  font-size: 21px;
  line-height: 24px;
  text-align: center;
}

.styles-pane {
  width: 82px;
}

.big-top {
  display: flex;
  align-items: center;
  gap: 6px;
}

.big-icon {
  width: 64px;
  height: 64px;
}

.big:disabled {
  color: #8a8a8a;
}

.sensitivity .big-icon {
  width: 56px;
}

.sensitivity .chevron {
  color: #b4b4b4;
}

.big-group {
  min-width: 124px;
  padding: 0 24px;
}

.big-group:last-child {
  min-width: 108px;
}

/* document */

.desk {
  display: flex;
  flex: 1;
  justify-content: center;
  background: #ebebeb;
}

.page {
  box-sizing: border-box;
  width: 1340px;
  padding: 127px 156px 0;
  border: solid #c8c8c8;
  border-width: 0 2px;
  background: #fff;
  box-shadow: 0 0 6px rgba(0, 0, 0, 0.1);
}

.quote {
  margin: 0 0 28px 158px;
  color: #000;
  font-family: "Liberation Sans", Arial, sans-serif;
  font-size: 24px;
  line-height: 28px;
  white-space: pre;
}

.quote p {
  margin: 0;
}

.spell {
  text-decoration: underline wavy #df3b30 2px;
  text-decoration-skip-ink: none;
  text-underline-offset: 1px;
}

.grammar {
  text-decoration: underline double #2f5fd0 2px;
  text-decoration-skip-ink: none;
  text-underline-offset: 2px;
}

.caret {
  width: 2px;
  height: 32px;
  background: #000;
}

/* status bar */

.statusbar {
  display: flex;
  justify-content: space-between;
  box-sizing: border-box;
  height: 46px;
  padding: 0 54px 0 48px;
  border-top: 2px solid #a0a0a0;
  background: linear-gradient(#e3e3e3, #d6d6d6);
  color: #4d4d4d;
  font-size: 24px;
}

.status-left,
.status-right {
  display: flex;
  align-items: stretch;
}

.status-left {
  gap: 39px;
}

.focus {
  gap: 12px;
  margin-right: 20px;
}

.view {
  padding: 0 20px;
}

.view.active {
  padding: 0 21px;
  background: #a3a3a3;
}

.step {
  align-self: center;
  width: 16px;
  height: 16px;
  margin: 0 14px;
  background: linear-gradient(#666, #666) center / 16px 4px no-repeat;
}

.plus {
  background: linear-gradient(#666, #666) center / 16px 4px no-repeat, linear-gradient(#666, #666) center / 4px 16px no-repeat;
}

.zoom {
  align-self: center;
  appearance: none;
  width: 200px;
  height: 8px;
  margin: 0;
  border-radius: 4px;
  background: #969696;
}

.zoom::-webkit-slider-thumb {
  appearance: none;
  width: 32px;
  height: 30px;
  border-radius: 15px;
  background: #f4f4f4;
  box-shadow: 0 1px 3px rgba(0, 0, 0, 0.4);
}

.zoom-value {
  margin-left: 24px;
}

/* floating screenshot preview */

.preview {
  position: absolute;
  right: 24px;
  bottom: 24px;
  padding: 8px;
  border-radius: 6px;
  background: #fff;
  box-shadow: 0 0 6px rgba(0, 0, 0, 0.3), 0 8px 56px rgba(0, 0, 0, 0.28);
}

.preview-shot {
  width: 288px;
  height: 180px;
  outline: 1px solid #a0a0a0;
  outline-offset: -1px;
}

.mini-doc {
  font-family: "Liberation Sans", Arial, sans-serif;
  font-size: 24px;
  stroke: #000;
  stroke-width: 2px;
}

.inverse {
  fill: #fff;
}
</style>
